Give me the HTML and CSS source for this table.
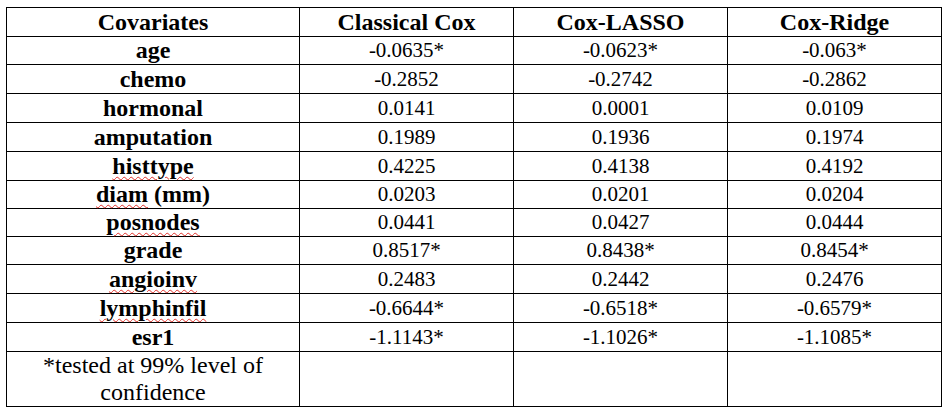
FILE: index.html
```html
<!DOCTYPE html>
<html lang="en">
<head>
<meta charset="utf-8">
<title>Cox model coefficients</title>
<link rel="stylesheet" href="styles.css">
</head>
<body>
<div class="sheet">
  <div class="cell head">Covariates</div>
  <div class="cell head">Classical Cox</div>
  <div class="cell head">Cox-LASSO</div>
  <div class="cell head">Cox-Ridge</div>

  <div class="cell head">age</div>
  <div class="cell num">-0.0635*</div>
  <div class="cell num">-0.0623*</div>
  <div class="cell num">-0.063*</div>

  <div class="cell head">chemo</div>
  <div class="cell num">-0.2852</div>
  <div class="cell num">-0.2742</div>
  <div class="cell num">-0.2862</div>

  <div class="cell head">hormonal</div>
  <div class="cell num">0.0141</div>
  <div class="cell num">0.0001</div>
  <div class="cell num">0.0109</div>

  <div class="cell head">amputation</div>
  <div class="cell num">0.1989</div>
  <div class="cell num">0.1936</div>
  <div class="cell num">0.1974</div>

  <div class="cell head"><span class="spell">histtype</span></div>
  <div class="cell num">0.4225</div>
  <div class="cell num">0.4138</div>
  <div class="cell num">0.4192</div>

  <div class="cell head"><span><span class="spell">diam</span> (mm)</span></div>
  <div class="cell num">0.0203</div>
  <div class="cell num">0.0201</div>
  <div class="cell num">0.0204</div>

  <div class="cell head"><span class="spell">posnodes</span></div>
  <div class="cell num">0.0441</div>
  <div class="cell num">0.0427</div>
  <div class="cell num">0.0444</div>

  <div class="cell head">grade</div>
  <div class="cell num">0.8517*</div>
  <div class="cell num">0.8438*</div>
  <div class="cell num">0.8454*</div>

  <div class="cell head"><span class="spell">angioinv</span></div>
  <div class="cell num">0.2483</div>
  <div class="cell num">0.2442</div>
  <div class="cell num">0.2476</div>

  <div class="cell head"><span class="spell">lymphinfil</span></div>
  <div class="cell num">-0.6644*</div>
  <div class="cell num">-0.6518*</div>
  <div class="cell num">-0.6579*</div>

  <div class="cell head">esr1</div>
  <div class="cell num">-1.1143*</div>
  <div class="cell num">-1.1026*</div>
  <div class="cell num">-1.1085*</div>

  <div class="cell note">*tested at 99% level of confidence</div>
  <div class="cell"></div>
  <div class="cell"></div>
  <div class="cell"></div>
</div>
</body>
</html>
```

FILE: styles.css
```css
body {
  margin: 7px 0 0 6px;
  background: #fff;
  color: #000;
  font-family: "Liberation Serif", "Noto Serif", "DejaVu Serif", serif;
}

.sheet {
  display: grid;
  grid-template-columns: 293px 214px 214px 214px;
  grid-template-rows: 29px 28px 29px 29px 29px 29px 28px 28px 28px 29px 29px 29px 55px;
  width: 935px;
  border-top: 1px solid #000;
  border-left: 1px solid #000;
}

.cell {
  display: flex;
  align-items: center;
  justify-content: center;
  border-right: 1px solid #000;
  border-bottom: 1px solid #000;
  font-family: "Liberation Serif", "Noto Serif", "DejaVu Serif", serif;
  white-space: nowrap;
}

.head {
  font-size: 24px;
  font-weight: bold;
}

.num {
  font-size: 21px;
}

.note {
  font-size: 24px;
  line-height: 27px;
  text-align: center;
  white-space: normal;
  padding: 0 10px;
}

.spell {
  text-decoration: underline wavy #e0302a;
  text-decoration-thickness: 1px;
  text-underline-offset: 2px;
}
```
